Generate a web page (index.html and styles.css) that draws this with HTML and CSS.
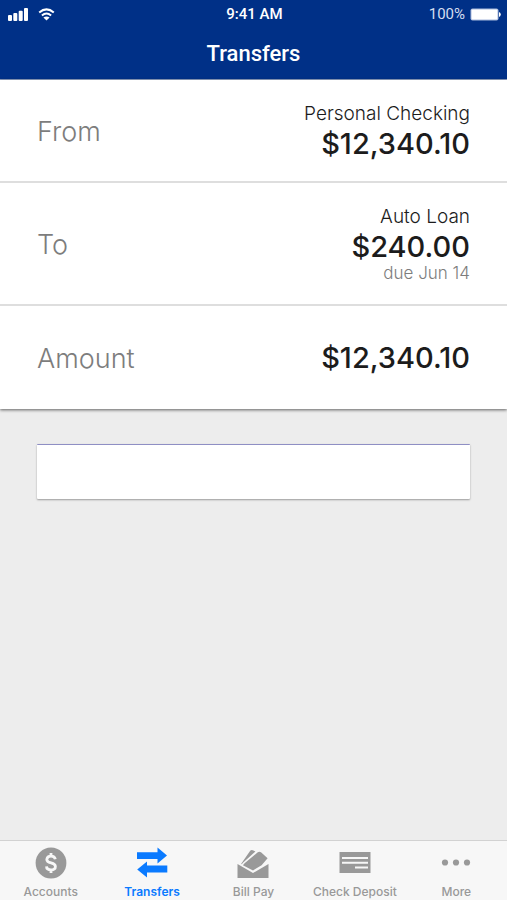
FILE: index.html
```html
<!DOCTYPE html>
<html lang="en">
<head>
<meta charset="utf-8">
<meta name="viewport" content="width=device-width, initial-scale=1">
<title>Transfers</title>
<link rel="stylesheet" href="styles.css">
</head>
<body>
<header class="header">
  <div class="status">
    <div class="status-side">
      <svg class="signal" width="20" height="13" viewBox="0 0 20 13" aria-hidden="true"><rect x="0" y="7" width="4" height="6" rx="1"/><rect x="5.3" y="5" width="4" height="8" rx="1"/><rect x="10.7" y="2.8" width="4" height="10.2" rx="1"/><rect x="16" y="0" width="4" height="13" rx="1"/></svg>
      <svg class="wifi" width="17" height="13" viewBox="0 0 17 13" aria-hidden="true"><path d="M1.2 4.6Q8.5-1.8 15.8 4.6M3.9 7.5Q8.5 3.4 13.1 7.5" fill="none" stroke="#fff" stroke-width="2"/><path d="M8.5 12.6L5.4 9.6Q8.5 7.3 11.6 9.6Z" fill="#fff"/></svg>
    </div>
    <div class="time">9:41 AM</div>
    <div class="status-side status-right">
      <span class="percent">100%</span>
      <svg width="31" height="13" viewBox="0 0 31 13" aria-hidden="true"><rect x=".5" y=".5" width="28" height="12" rx="2" fill="#a8b9dc"/><rect x="1.5" y="1.5" width="26" height="10" rx="1" fill="#fff"/><path d="M29 4Q30.8 4.7 30.8 6.5T29 9Z" fill="#fff"/></svg>
    </div>
  </div>
  <h1 class="title">Transfers</h1>
</header>
<main class="main">
  <section class="card">
    <div class="row">
      <div class="label">From</div>
      <div class="value">
        <div class="account">Personal Checking</div>
        <div class="money">$12,340.10</div>
      </div>
    </div>
    <div class="row row-tall">
      <div class="label">To</div>
      <div class="value">
        <div class="account">Auto Loan</div>
        <div class="money">$240.00</div>
        <div class="due">due Jun 14</div>
      </div>
    </div>
    <div class="row row-total">
      <div class="label">Amount</div>
      <div class="value">
        <div class="money">$12,340.10</div>
      </div>
    </div>
  </section>
  <div class="entry">
    <input class="field" type="text" aria-label="Transfer details">
  </div>
</main>
<nav class="tabs">
  <a class="tab" href="#accounts">
    <svg width="32" height="32" viewBox="0 0 32 32" aria-hidden="true"><circle cx="16" cy="16" r="15.4" fill="currentColor"/><path d="M20.3 12.3Q19.7 9.2 16 9.2T11.8 12.4C11.8 17 20.4 14.7 20.4 19.4Q20.4 22.8 16 22.8T11.5 19.4M16 6V9.5M16 22.5V26" fill="none" stroke="#f7f7f7" stroke-width="2.8"/></svg>
    <span>Accounts</span>
  </a>
  <a class="tab active" href="#transfers" aria-current="page">
    <svg width="32" height="32" viewBox="0 0 32 32" aria-hidden="true"><path d="M1 5.3H21.5V.6L31 8.5L21.5 16.4V12H1ZM31.3 18.6H11V14.6L1.2 22.6L11 30.6V25.4H31.3Z" fill="currentColor"/></svg>
    <span>Transfers</span>
  </a>
  <a class="tab" href="#bill-pay">
    <svg width="32" height="32" viewBox="0 0 32 32" aria-hidden="true"><path d="M.5 17L16 26L31.5 17V31H.5ZM4.2 16.8L13.4 3.4Q15.2 2 18.4 4.6L6.2 15.4L4.7 17.2ZM5.9 18.2L7.6 16.2L20.8 5.3Q22.4 4 24 5.3L30.6 11.2L24.6 18.2L16 23.4Z" fill="currentColor"/></svg>
    <span>Bill Pay</span>
  </a>
  <a class="tab" href="#check-deposit">
    <svg width="32" height="32" viewBox="0 0 32 32" aria-hidden="true"><path d="M.5 5H31.5V26H.5Z" fill="currentColor"/><path d="M3 11H29M3 15.7H29M16 20.4H29" stroke="#f7f7f7" stroke-width="2"/></svg>
    <span>Check Deposit</span>
  </a>
  <a class="tab" href="#more">
    <svg width="32" height="32" viewBox="0 0 32 32" aria-hidden="true"><g fill="currentColor"><circle cx="5" cy="15.5" r="3.1"/><circle cx="16" cy="15.5" r="3.1"/><circle cx="27" cy="15.5" r="3.1"/></g></svg>
    <span>More</span>
  </a>
</nav>
</body>
</html>
```
FILE: styles.css
```css
* {
  box-sizing: border-box;
}

body {
  margin: 0;
  min-height: 100vh;
  display: flex;
  flex-direction: column;
  background: #ededed;
  color: #1c1c1c;
  font-family: Inter, "Liberation Sans", sans-serif;
}

.header {
  background: #003087;
  color: #fff;
  font-family: Roboto, sans-serif;
  border-bottom: 1px solid #8c9dc0;
}

.status {
  display: grid;
  grid-template-columns: 1fr auto 1fr;
  align-items: center;
  height: 28px;
  padding: 0 6px 0 8px;
}

.status-side {
  display: flex;
  align-items: center;
  gap: 10px;
}

.status-right {
  justify-content: flex-end;
  gap: 5px;
}

.signal {
  fill: #fff;
}

.time {
  font-size: 15px;
  font-weight: 500;
}

.percent {
  font-size: 15px;
  color: #d5deef;
}

.title {
  margin: 0;
  padding: 11px 0 10px;
  font-size: 22px;
  line-height: 30px;
  font-weight: 500;
  text-align: center;
}

.main {
  flex: 1;
}

.card {
  background: #fff;
  box-shadow: 0 1px 3px rgba(0, 0, 0, 0.6);
}

.row {
  display: flex;
  align-items: center;
  justify-content: space-between;
  min-height: 101px;
  padding: 0 37px;
}

.row + .row {
  border-top: 2px solid #dedede;
}

.row.row-tall {
  min-height: 123px;
}

.row.row-total {
  min-height: 105px;
}

.label {
  padding-top: 2px;
  font-size: 27px;
  font-weight: 300;
  color: #7d7d7d;
}

.value {
  text-align: right;
}

.account {
  font-size: 19px;
  line-height: 26px;
  font-weight: 300;
}

.money {
  font-size: 29px;
  line-height: 33px;
  font-weight: 450;
}

.due {
  font-size: 17px;
  line-height: 21px;
  font-weight: 300;
  color: #7d7d7d;
}

.entry {
  padding: 35px 37px;
}

.field {
  display: block;
  width: 100%;
  height: 55px;
  padding: 0 16px;
  border: 0;
  border-top: 1px solid #8f8fc4;
  border-radius: 1px;
  background: #fff;
  box-shadow: 0 1px 2px rgba(0, 0, 0, 0.35);
  font: inherit;
  font-size: 20px;
  outline: 0;
}

.tabs {
  display: grid;
  grid-template-columns: repeat(5, 1fr);
  background: #f7f7f7;
  border-top: 1px solid #d2d2d2;
}

.tab {
  display: flex;
  flex-direction: column;
  align-items: center;
  gap: 5px;
  padding: 6px 0 0;
  color: #999;
  font-size: 12px;
  line-height: 16px;
  font-weight: 500;
  text-decoration: none;
  white-space: nowrap;
}

.active {
  color: #0a7aff;
  font-weight: 600;
}
```
